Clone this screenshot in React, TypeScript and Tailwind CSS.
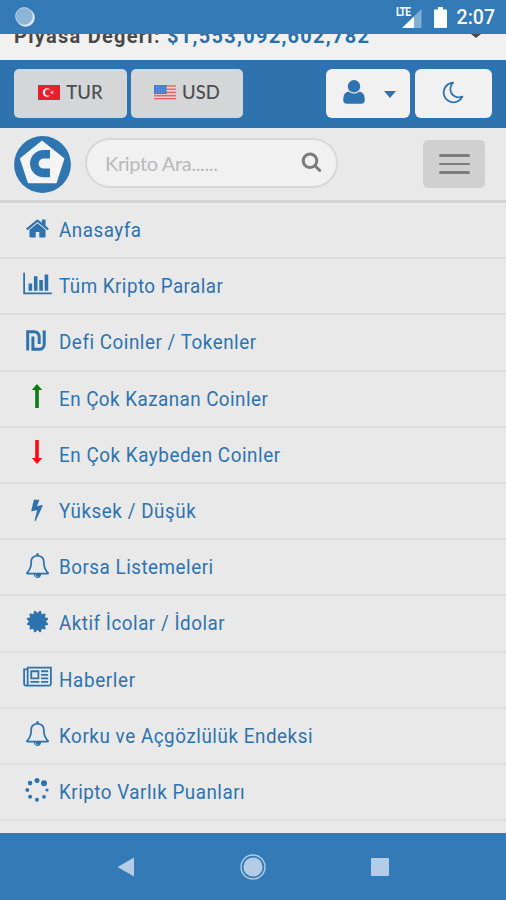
import { useState } from "react";
import type { ReactNode } from "react";

interface MenuItem {
  label: string;
  tracking: string;
  icon: ReactNode;
}

interface GlyphProps {
  d: string;
  className: string;
  wide?: boolean;
}

function Glyph({ d, className, wide = false }: GlyphProps) {
  return (
    <svg viewBox={wide ? "0 0 2048 1792" : "0 0 1792 1792"} className={className} fill="currentColor">
      <path d={d} />
    </svg>
  );
}

const HOME =
  "M1472 992v480q0 26-19 45t-45 19h-384v-384h-256v384h-384q-26 0-45-19t-19-45v-480q0-1 .5-3t.5-3l575-474 575 474q1 2 1 6zm223-69l-62 74q-8 9-21 11h-3q-13 0-21-7l-692-577-692 577q-12 8-24 7-13-2-21-11l-62-74q-8-10-7-23.5t11-21.5l719-599q32-26 76-26t76 26l244 204v-195q0-14 9-23t23-9h192q14 0 23 9t9 23v408l219 182q10 8 11 21.5t-7 23.5z";
const CHART =
  "M640 896v512h-256v-512h256zm384-512v1024h-256v-1024h256zm1024 1152v128h-2048v-1536h128v1408h1920zm-640-896v768h-256v-768h256zm384-384v1152h-256v-1152h256z";
const BOLT =
  "M1333 566q18 20 7 44l-540 1157q-13 25-42 25-4 0-14-2-17-5-25.5-19t-4.5-30l197-808-406 101q-4 1-12 1-18 0-31-11-18-15-13-39l201-825q4-14 16-23t28-9h328q19 0 32 12.5t13 29.5q0 8-5 18l-171 463 396-98q8-2 12-2 19 0 34 15z";
const BELL =
  "M912 1696q0-16-16-16-59 0-101.5-42.5t-42.5-101.5q0-16-16-16t-16 16q0 73 51.5 124.5t124.5 51.5q16 0 16-16zm-666-288h1300q-266-300-266-832 0-51-24-105t-69-103-121.5-80.5-169.5-31.5-169.5 31.5-121.5 80.5-69 103-24 105q0 532-266 832zm1482 0q0 52-38 90t-90 38h-448q0 106-75 181t-181 75-181-75-75-181h-448q-52 0-90-38t-38-90q50-42 91-88t85-119.5 74.5-158.5 50-206 19.5-260q0-152 117-282.5t307-158.5q-8-19-8-39 0-40 28-68t68-28 68 28 28 68q0 20-8 39 190 28 307 158.5t117 282.5q0 139 19.5 260t50 206 74.5 158.5 85 119.5 91 88z";
const CERTIFICATE =
  "M1504 896l138 135q30 28 20 70-12 41-52 51l-188 48 53 186q12 41-19 70-29 31-70 19l-186-53-48 188q-10 40-51 52-12 2-19 2-31 0-51-22l-135-138-135 138q-28 30-70 20-41-11-51-52l-48-188-186 53q-41 12-70-19-31-29-19-70l53-186-188-48q-40-10-52-51-10-42 20-70l138-135-138-135q-30-28-20-70 12-41 52-51l188-48-53-186q-12-41 19-70 29-31 70-19l186 53 48-188q10-41 51-51 41-12 70 19l135 139 135-139q29-30 70-19 41 10 51 51l48 188 186-53q41-12 70 19 31 29 19 70l-53 186 188 48q40 10 52 51 10 42-20 70z";
const NEWS =
  "M1024 512h-384v384h384v-384zm128 640v128h-640v-128h640zm0-768v640h-640v-640h640zm640 768v128h-512v-128h512zm0-256v128h-512v-128h512zm0-256v128h-512v-128h512zm0-256v128h-512v-128h512zm-1536 960v-960h-128v960q0 26 19 45t45 19 45-19 19-45zm1664 0v-1088h-1536v1088q0 33-11 64h1483q26 0 45-19t19-45zm128-1216v1216q0 80-56 136t-136 56h-1664q-80 0-136-56t-56-136v-1088h256v-128h1792z";
const MOON =
  "M1390 1303q-54 9-110 9-182 0-337-90t-245-245-90-337q0-192 104-357-201 60-328.5 229t-127.5 384q0 130 51 248.5t136.5 204 204 136.5 248.5 51q144 0 273.5-61.5t220.5-171.5zm203-85q-94 203-283.5 324.5t-413.5 121.5q-156 0-298-61t-245-164-164-245-61-298q0-153 57.5-292.5t156-241.5 235.5-164.5 290-68.5q44-2 61 39 18 41-15 72-86 78-131.5 181.5t-45.5 218.5q0 148 73 273t198 198 273 73q118 0 228-51 41-18 72 13 14 14 17.5 34t-4.5 38z";
const SEARCH =
  "M1216 832q0-185-131.5-316.5t-316.5-131.5-316.5 131.5-131.5 316.5 131.5 316.5 316.5 131.5 316.5-131.5 131.5-316.5zm512 832q0 52-38 90t-90 38q-54 0-90-38l-343-342q-179 124-399 124-143 0-273.5-55.5t-225-150-150-225-55.5-273.5 55.5-273.5 150-225 225-150 273.5-55.5 273.5 55.5 225 150 150 225 55.5 273.5q0 220-124 399l343 343q37 37 37 90z";

const bell = <Glyph d={BELL} className="h-[25px] w-[25px]" />;

const items: MenuItem[] = [
  { label: "Anasayfa", tracking: "tracking-[0.55px]", icon: <Glyph d={HOME} className="h-[25px] w-[25px]" /> },
  { label: "Tüm Kripto Paralar", tracking: "tracking-[0.5px]", icon: <Glyph wide d={CHART} className="mb-px h-[25px] w-[29px]" /> },
  {
    label: "Defi Coinler / Tokenler",
    tracking: "tracking-[0.57px]",
    icon: (
      <svg viewBox="0 0 20 21" className="mr-[3px] h-[21px] w-5" fill="none" stroke="currentColor" strokeWidth="3">
        <path d="M1.7 20.5V1.7h6.5a5 5 0 0 1 5 5v7.2M6.9 6.4v12.9h6.3a5 5 0 0 0 5-5V.5" />
      </svg>
    ),
  },
  {
    label: "En Çok Kazanan Coinler",
    tracking: "tracking-[0.5px]",
    icon: (
      <svg viewBox="0 0 12 24" className="mb-px h-6 w-3 text-[#087d12]" fill="currentColor">
        <path d="M6 0 11.2 6H7.8v18H4.2V6H.8z" />
      </svg>
    ),
  },
  {
    label: "En Çok Kaybeden Coinler",
    tracking: "tracking-[0.6px]",
    icon: (
      <svg viewBox="0 0 12 24" className="mb-px h-6 w-3 text-[#fa0c0c]" fill="currentColor">
        <path d="M6 24 11.2 18H7.8V0H4.2v18H.8z" />
      </svg>
    ),
  },
  { label: "Yüksek / Düşük", tracking: "tracking-[0.6px]", icon: <Glyph d={BOLT} className="h-[23px] w-[26px]" /> },
  { label: "Borsa Listemeleri", tracking: "tracking-[0.55px]", icon: bell },
  { label: "Aktif İcolar / İdolar", tracking: "tracking-[0.55px]", icon: <Glyph d={CERTIFICATE} className="h-[25px] w-[25px]" /> },
  { label: "Haberler", tracking: "tracking-[0.7px]", icon: <Glyph wide d={NEWS} className="h-[25px] w-[29px]" /> },
  { label: "Korku ve Açgözlülük Endeksi", tracking: "tracking-[0.6px]", icon: bell },
  {
    label: "Kripto Varlık Puanları",
    tracking: "tracking-[0.55px]",
    icon: (
      <svg viewBox="0 0 24 24" className="h-6 w-6" fill="currentColor">
        <circle cx="12" cy="2.5" r="2.5" />
        <circle cx="19" cy="5.3" r="3" />
        <circle cx="22" cy="12" r="1.6" />
        <circle cx="19" cy="18.8" r="1.9" />
        <circle cx="12" cy="21.7" r="2" />
        <circle cx="5.1" cy="18.8" r="2" />
        <circle cx="2.3" cy="12" r="1.9" />
        <circle cx="5.1" cy="5.1" r="2.3" />
      </svg>
    ),
  },
];

function StatusBar() {
  return (
    <div className="relative z-10 flex h-[34px] shrink-0 items-center bg-[#337ab7] pl-[15px] pr-[11px]">
      <svg viewBox="0 0 20 20" className="h-5 w-5">
        <circle cx="10.5" cy="10.5" r="9.3" fill="#e4edf5" />
        <circle cx="9.2" cy="9.2" r="8.6" fill="#8db5d8" stroke="#b5cfe5" strokeWidth="1" />
      </svg>
      <div className="ml-auto flex items-center pt-px text-white">
        <div className="relative mr-3 h-[22px] w-[26px]">
          <svg viewBox="0 0 26 22" className="h-full w-full">
            <path d="M25.5 2v19H6z" fill="#82aed3" />
            <path d="M18 9.5V21H6z" fill="#fff" />
          </svg>
          <span className="absolute left-0 top-0 origin-left scale-x-[0.85] bg-[#337ab7] pr-px text-[12px] font-bold leading-[11px] tracking-[-0.9px] [font-family:Roboto,sans-serif]">
            LTE
          </span>
        </div>
        <svg viewBox="0 0 13 21" className="h-[21px] w-[13px]">
          <path d="M4 0h5v2.4h3.2q.8 0 .8.8v17q0 .8-.8.8H.8q-.8 0-.8-.8v-17q0-.8.8-.8H4z" fill="#fff" />
        </svg>
        <span className="ml-[10px] text-[19.5px] font-medium leading-none [font-family:Roboto,sans-serif]">2:07</span>
      </div>
    </div>
  );
}

function TurkishFlag() {
  return (
    <svg viewBox="0 0 22 15" className="mb-[3px] h-[15px] w-[22px]">
      <path d="M0 0h22v15H0z" fill="#e8202d" />
      <circle cx="9" cy="7.5" r="4.2" fill="#fff" />
      <circle cx="10.2" cy="7.5" r="3.2" fill="#e8202d" />
      <path d="m12 7.5 3.8-1.8-1.2 1.8 1.2 1.8z" fill="#fff" />
    </svg>
  );
}

function AmericanFlag() {
  return (
    <svg viewBox="0 0 22 15" className="mb-[3px] h-[15px] w-[22px]">
      <path d="M0 0h22v15H0z" fill="#f0d9dc" />
      <path d="M0 1h22M0 4.2h22M0 7.4h22M0 10.6h22M0 13.8h22" stroke="#e2686d" strokeWidth="1.6" />
      <path d="M0 0h12.5v9H0z" fill="#4a79cf" />
      <path d="M2 2h9M2 4.5h9M2 7h9" stroke="#9dbbe8" strokeWidth=".8" strokeDasharray="1 1.5" />
    </svg>
  );
}

function Logo() {
  return (
    <svg viewBox="0 0 57 57" className="h-[57px] w-[57px] shrink-0">
      <circle cx="28.5" cy="28.5" r="28.4" fill="#2f75b0" />
      <path d="M28 4.5 50.5 22.5 42.5 47.3H14L5.8 22.5z" fill="#f4f4f4" />
      <path d="M36 18.3h-6.4a9.3 9.3 0 0 0 0 18.6H36" fill="none" stroke="#2f75b0" strokeWidth="8.6" />
    </svg>
  );
}

export default function App() {
  const [query, setQuery] = useState("");

  return (
    <div className="flex h-[900px] w-[506px] flex-col overflow-hidden bg-[#e9e9e9] [font-family:Roboto,sans-serif]">
      <StatusBar />

      {/* Ticker, partly scrolled under the status bar */}
      <div className="-mt-3 flex h-[38px] shrink-0 items-start justify-between bg-[#f1f1f1] pl-[14px] pr-[25px]">
        <p className="mt-[2px] whitespace-nowrap text-[20px] font-bold leading-6 tracking-[1.27px] text-[#48494b]">
          Piyasa Değeri: <span className="text-[#2870ad]">$1,553,092,602,782</span>
        </p>
        <svg viewBox="0 0 10 4" className="mt-3 h-1 w-[10px]" fill="#48494b">
          <path d="M0 0h10L5 4z" />
        </svg>
      </div>

      {/* Toolbar */}
      <div className="flex h-[68px] shrink-0 items-center bg-[#2e73ae] px-[14px] pb-px [font-family:Lato,sans-serif]">
        <button className="flex h-[49px] w-[113px] items-center justify-center gap-[6px] rounded-[5px] bg-[#d5d6d7] text-[18.5px] font-medium text-[#4b4d50]">
          <TurkishFlag />
          <span className="pb-px">TUR</span>
        </button>
        <button className="ml-1 flex h-[49px] w-[112px] items-center justify-center gap-[6px] rounded-[5px] bg-[#d5d6d7] text-[18.5px] font-medium text-[#4b4d50]">
          <AmericanFlag />
          <span className="pb-px">USD</span>
        </button>
        <button className="ml-auto flex h-[49px] w-[84px] items-center rounded-[6px] bg-[#f1f1f1] pl-[17px] text-[#2e73ae]">
          <svg viewBox="0 0 22 24" className="mb-[3px] h-6 w-[22px]" fill="currentColor">
            <circle cx="11" cy="6.3" r="6.2" />
            <path d="M5.3 11.5Q11 15.8 16.7 11.5q5.1 1 5.1 8.2 0 4.1-3.7 4.1H3.9q-3.7 0-3.7-4.1 0-7.2 5.1-8.2z" />
          </svg>
          <svg viewBox="0 0 12 7" className="ml-[19px] mt-px h-[7px] w-3" fill="currentColor">
            <path d="M0 0h12L6 7z" />
          </svg>
        </button>
        <button className="ml-[5px] flex h-[49px] w-[77px] items-center justify-center rounded-[6px] bg-[#f1f1f1] pb-[2px] text-[#2e73ae]">
          <Glyph d={MOON} className="h-[25px] w-[25px]" />
        </button>
      </div>

      {/* Brand and search */}
      <div className="flex h-[75px] shrink-0 items-center border-b-[3px] border-[#d3d3d3] pl-[14px] pr-[21px]">
        <Logo />
        <div className="mb-[2px] ml-[14px] flex h-[50px] w-[253px] items-center rounded-full border-2 border-[#d8d8d8] bg-[#f1f1f1] pl-[18px] pr-[14px]">
          <input
            value={query}
            onChange={(e) => setQuery(e.target.value)}
            placeholder="Kripto Ara......"
            className="min-w-0 flex-1 bg-transparent text-[20px] tracking-[-0.35px] text-[#555] outline-none placeholder:text-[#b9b9b9] [font-family:Lato,sans-serif]"
          />
          <Glyph d={SEARCH} className="mb-1 h-[21px] w-[21px] text-[#7c7c7c]" />
        </div>
        <button className="ml-auto flex h-12 w-[62px] flex-col items-center justify-center gap-[6px] rounded-[5px] bg-[#d0d0d0]">
          <span className="h-[2.5px] w-[31px] rounded-full bg-[#7d7d7d]" />
          <span className="h-[2.5px] w-[31px] rounded-full bg-[#7d7d7d]" />
          <span className="h-[2.5px] w-[31px] rounded-full bg-[#7d7d7d]" />
        </button>
      </div>

      {/* Menu */}
      <nav className="flex h-[630px] shrink-0 flex-col">
        {items.map((item) => (
          <a key={item.label} className="flex h-[56.2px] shrink-0 items-center border-b-2 border-[#dedede] pl-[22px] text-[#2e73ae]">
            <span className="mb-1 flex w-[30px] justify-center">{item.icon}</span>
            <span className={`ml-[7px] origin-left scale-x-[0.94] whitespace-nowrap text-[20px] leading-6 ${item.tracking}`}>
              {item.label}
            </span>
          </a>
        ))}
      </nav>

      {/* Android navigation */}
      <div className="grid h-[67px] shrink-0 grid-cols-3 items-center justify-items-center bg-[#337ab7] px-[63px] text-[#b4cce5]">
        <svg viewBox="0 0 18 20" className="h-5 w-[18px]" fill="currentColor">
          <path d="M17 .5v19L.5 10z" />
        </svg>
        <svg viewBox="0 0 26 26" className="h-[26px] w-[26px]" fill="currentColor">
          <circle cx="13" cy="13" r="9.6" />
          <circle cx="13" cy="13" r="12" fill="none" stroke="currentColor" strokeWidth="1.4" />
        </svg>
        <svg viewBox="0 0 18 18" className="h-[18px] w-[18px]" fill="currentColor">
          <rect width="18" height="18" rx="1" />
        </svg>
      </div>
    </div>
  );
}
